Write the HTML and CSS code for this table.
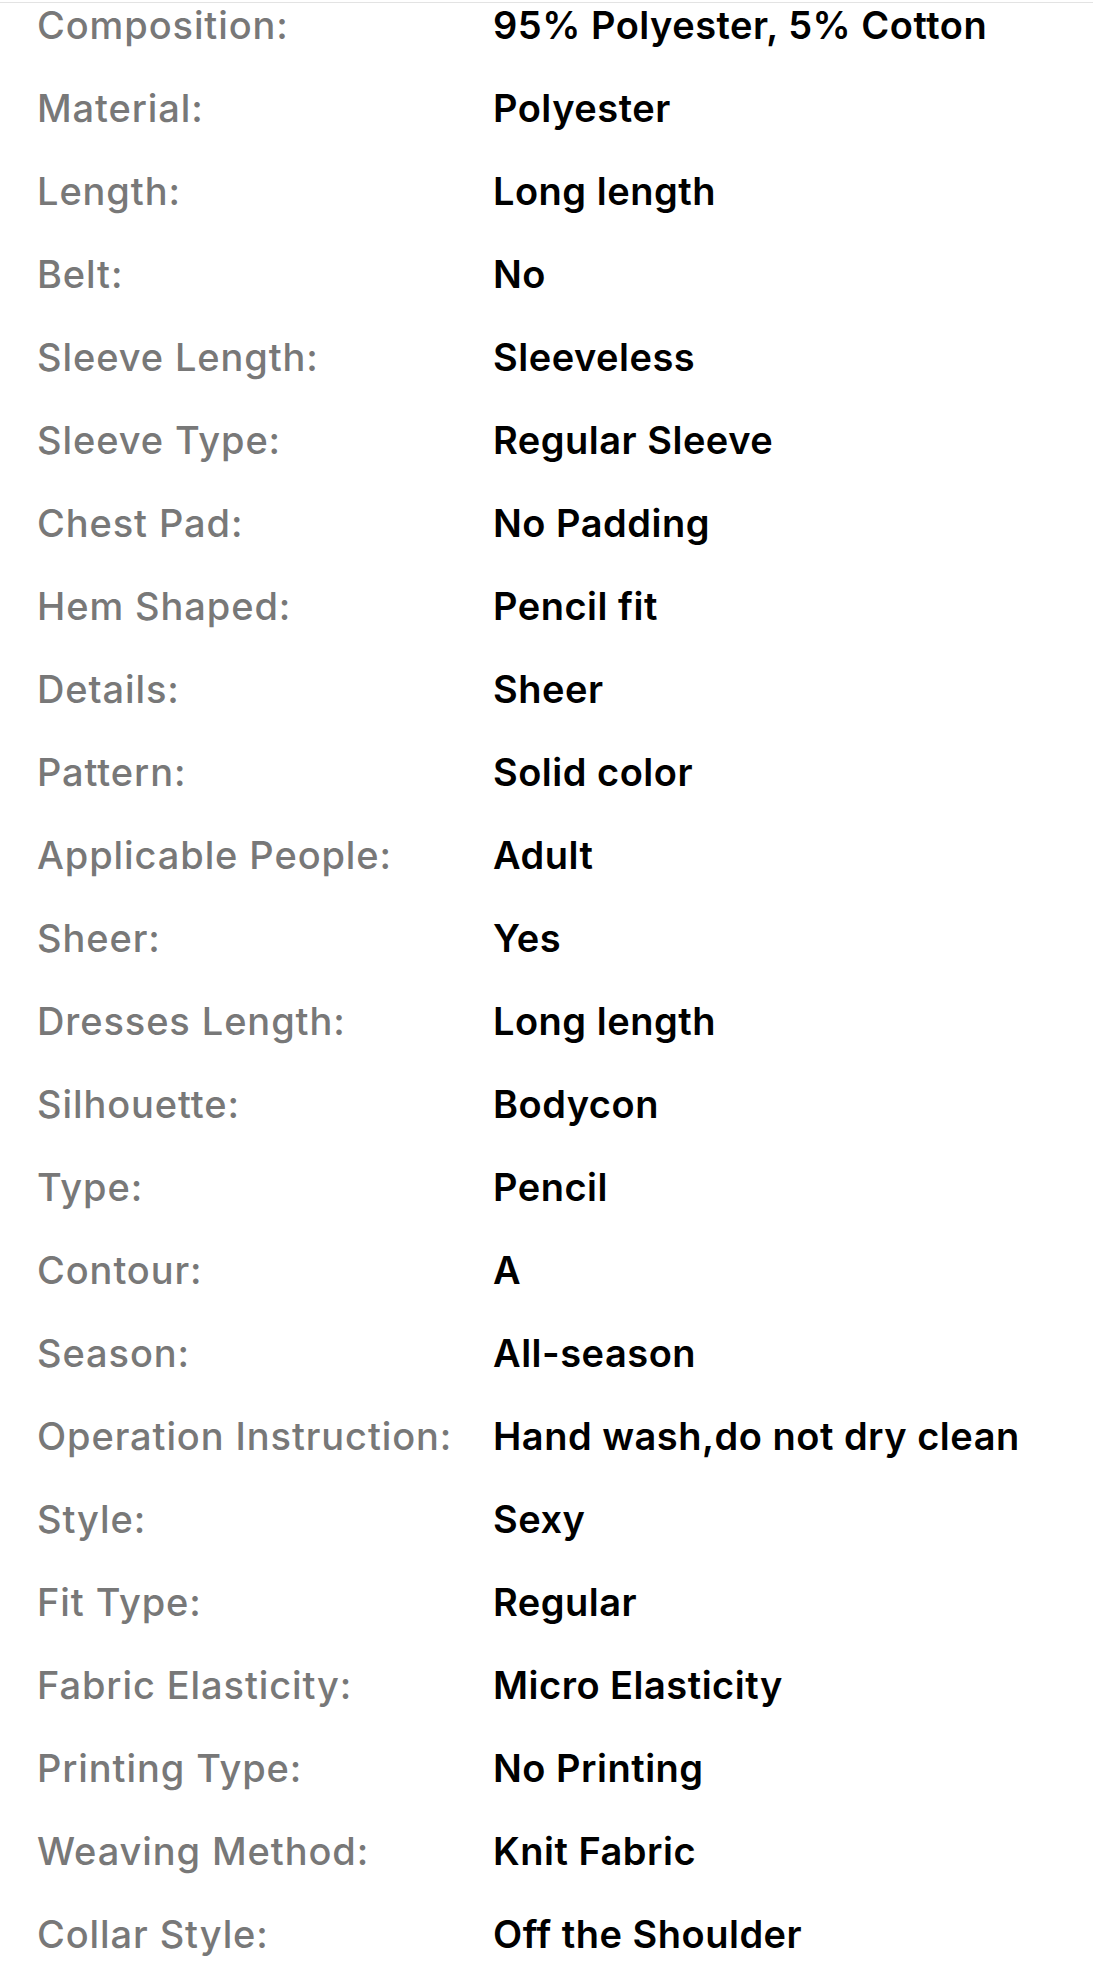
FILE: index.html
```html
<!DOCTYPE html>
<html lang="en">
<head>
<meta charset="utf-8">
<title>Product details</title>
<link rel="stylesheet" href="styles.css">
</head>
<body>
<dl class="specs">
  <dt>Composition:</dt><dd>95% Polyester, 5% Cotton</dd>
  <dt>Material:</dt><dd>Polyester</dd>
  <dt>Length:</dt><dd>Long length</dd>
  <dt>Belt:</dt><dd>No</dd>
  <dt>Sleeve Length:</dt><dd>Sleeveless</dd>
  <dt>Sleeve Type:</dt><dd>Regular Sleeve</dd>
  <dt>Chest Pad:</dt><dd>No Padding</dd>
  <dt>Hem Shaped:</dt><dd>Pencil fit</dd>
  <dt>Details:</dt><dd>Sheer</dd>
  <dt>Pattern:</dt><dd>Solid color</dd>
  <dt>Applicable People:</dt><dd>Adult</dd>
  <dt>Sheer:</dt><dd>Yes</dd>
  <dt>Dresses Length:</dt><dd>Long length</dd>
  <dt>Silhouette:</dt><dd>Bodycon</dd>
  <dt>Type:</dt><dd>Pencil</dd>
  <dt>Contour:</dt><dd>A</dd>
  <dt>Season:</dt><dd>All-season</dd>
  <dt>Operation Instruction:</dt><dd>Hand wash,do not dry clean</dd>
  <dt>Style:</dt><dd>Sexy</dd>
  <dt>Fit Type:</dt><dd>Regular</dd>
  <dt>Fabric Elasticity:</dt><dd>Micro Elasticity</dd>
  <dt>Printing Type:</dt><dd>No Printing</dd>
  <dt>Weaving Method:</dt><dd>Knit Fabric</dd>
  <dt>Collar Style:</dt><dd>Off the Shoulder</dd>
</dl>
</body>
</html>
```
FILE: styles.css
```css
html, body {
  margin: 0;
  padding: 0;
  background: #ffffff;
}

body {
  font-family: Inter, "Noto Sans", "Liberation Sans", sans-serif;
}

.specs {
  margin: 2px 0 0 0;
  padding: 0 0 0 37px;
  border-top: 1px solid #e3e3e3;
  display: grid;
  grid-template-columns: 456px 1fr;
  row-gap: 38px;
  font-size: 38px;
  line-height: 45px;
}

.specs dt {
  margin: 0;
  color: #787878;
  font-weight: 500;
  letter-spacing: 0.9px;
}

.specs dd {
  margin: 0;
  color: #000000;
  font-weight: 600;
  letter-spacing: 0.5px;
}
```
